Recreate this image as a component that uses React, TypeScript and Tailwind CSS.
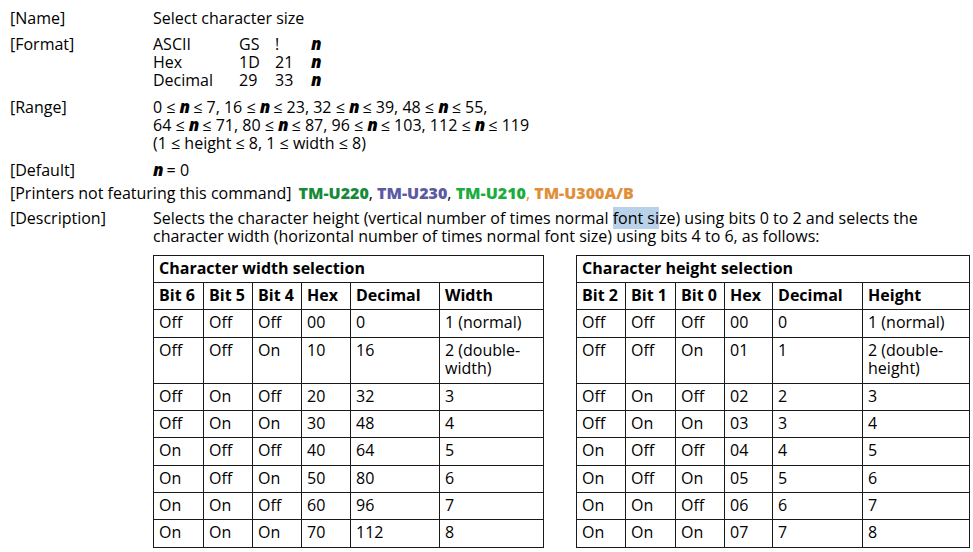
import React from "react";

const N = () => (
  <span className="inline-block h-[18px] leading-[18px] align-top font-extrabold italic text-[17px] mr-[3px]">n</span>
);

const widthRows = [
  ["Off", "Off", "Off", "00", "0", "1 (normal)"],
  ["Off", "Off", "On", "10", "16", "2 (double-\nwidth)"],
  ["Off", "On", "Off", "20", "32", "3"],
  ["Off", "On", "On", "30", "48", "4"],
  ["On", "Off", "Off", "40", "64", "5"],
  ["On", "Off", "On", "50", "80", "6"],
  ["On", "On", "Off", "60", "96", "7"],
  ["On", "On", "On", "70", "112", "8"],
];

const heightRows = [
  ["Off", "Off", "Off", "00", "0", "1 (normal)"],
  ["Off", "Off", "On", "01", "1", "2 (double-\nheight)"],
  ["Off", "On", "Off", "02", "2", "3"],
  ["Off", "On", "On", "03", "3", "4"],
  ["On", "Off", "Off", "04", "4", "5"],
  ["On", "Off", "On", "05", "5", "6"],
  ["On", "On", "Off", "06", "6", "7"],
  ["On", "On", "On", "07", "7", "8"],
];

const rowHeights = ["h-[28px]", "h-[46px]", "h-[27px]", "h-[27px]", "h-[28px]", "h-[27px]", "h-[27px]", "h-[28px]"];

function SizeTable({
  title,
  heads,
  rows,
  cols,
  width,
}: {
  title: string;
  heads: string[];
  rows: string[][];
  cols: string[];
  width: string;
}) {
  return (
    <table className={`${width} table-fixed border-collapse`}>
      <colgroup>
        {cols.map((c, i) => (
          <col key={i} className={c} />
        ))}
      </colgroup>
      <tbody>
        <tr className="h-[27px]">
          <td colSpan={6} className="border border-[#1a1a1a] px-[5px] pt-[3px] align-top font-bold">
            {title}
          </td>
        </tr>
        <tr className="h-[27px]">
          {heads.map((h) => (
            <td key={h} className="border border-[#1a1a1a] px-[5px] pt-[3px] align-top font-bold whitespace-nowrap">
              {h}
            </td>
          ))}
        </tr>
        {rows.map((r, i) => (
          <tr key={i} className={rowHeights[i]}>
            {r.map((c, j) => (
              <td key={j} className="border border-[#1a1a1a] px-[5px] pt-[3px] align-top whitespace-pre-line">
                {c}
              </td>
            ))}
          </tr>
        ))}
      </tbody>
    </table>
  );
}

export default function App() {
  return (
    <div className="w-[973px] h-[552px] bg-white text-black text-[16px] leading-[18px] font-['Open_Sans',sans-serif] overflow-hidden pt-[9px]">
      <div className="grid grid-cols-[143px_1fr] pl-[10px]">
        <div>[Name]</div>
        <div>Select character size</div>
      </div>

      <div className="grid grid-cols-[143px_1fr] pl-[10px] mt-[8px]">
        <div>[Format]</div>
        <div className="grid grid-cols-[86px_36px_36px_1fr]">
          <div>ASCII</div>
          <div>GS</div>
          <div>!</div>
          <div><N /></div>
          <div>Hex</div>
          <div>1D</div>
          <div>21</div>
          <div><N /></div>
          <div>Decimal</div>
          <div>29</div>
          <div>33</div>
          <div><N /></div>
        </div>
      </div>

      <div className="grid grid-cols-[143px_1fr] pl-[10px] mt-[9px]">
        <div>[Range]</div>
        <div>
          <div className="whitespace-nowrap">
            0 ≤ <N />≤ 7, 16 ≤ <N />≤ 23, 32 ≤ <N />≤ 39, 48 ≤ <N />≤ 55,
          </div>
          <div className="whitespace-nowrap">
            64 ≤ <N />≤ 71, 80 ≤ <N />≤ 87, 96 ≤ <N />≤ 103, 112 ≤ <N />≤ 119
          </div>
          <div>(1 ≤ height ≤ 8, 1 ≤ width ≤ 8)</div>
        </div>
      </div>

      <div className="grid grid-cols-[143px_1fr] pl-[10px] mt-[9px]">
        <div>[Default]</div>
        <div>
          <N />= 0
        </div>
      </div>

      <div className="pl-[10px] mt-[5px] flex gap-[7px]">
        <span>[Printers not featuring this command]</span>
        <span className="font-extrabold">
          <span className="text-[#178a3a]">TM-U220</span>
          <span className="font-normal">, </span>
          <span className="text-[#5c5aa2]">TM-U230</span>
          <span className="font-normal">, </span>
          <span className="text-[#1aad3c]">TM-U210</span>
          <span className="font-normal text-[#e0903c]">, </span>
          <span className="text-[#e0903c]">TM-U300A/B</span>
        </span>
      </div>

      <div className="grid grid-cols-[143px_1fr] pl-[10px] mt-[7px]">
        <div>[Description]</div>
        <div>
          <div className="whitespace-nowrap">
            Selects the character height (vertical number of times normal{" "}
            <span className="bg-[#b9d2ea]">font si</span>ze) using bits 0 to 2 and selects the
          </div>
          <div className="whitespace-nowrap">
            character width (horizontal number of times normal font size) using bits 4 to 6, as follows:
          </div>
        </div>
      </div>

      <div className="flex pl-[153px] gap-[32px] mt-[10px]">
        <SizeTable
          title="Character width selection"
          heads={["Bit 6", "Bit 5", "Bit 4", "Hex", "Decimal", "Width"]}
          rows={widthRows}
          width="w-[390px]"
          cols={["w-[50px]", "w-[49px]", "w-[49px]", "w-[49px]", "w-[89px]", "w-[104px]"]}
        />
        <SizeTable
          title="Character height selection"
          heads={["Bit 2", "Bit 1", "Bit 0", "Hex", "Decimal", "Height"]}
          rows={heightRows}
          width="w-[393px]"
          cols={["w-[49px]", "w-[50px]", "w-[49px]", "w-[48px]", "w-[90px]", "w-[107px]"]}
        />
      </div>
    </div>
  );
}
